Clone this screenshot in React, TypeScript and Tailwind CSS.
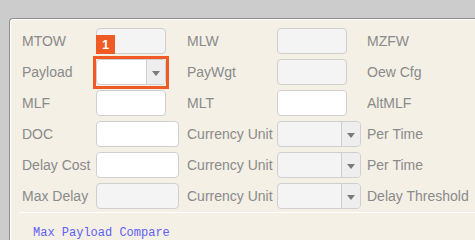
import React from "react";

const Label = ({ children }: { children: React.ReactNode }) => (
  <div className="flex items-center h-[26px] text-[14px] text-[#8a8a8a] whitespace-nowrap">{children}</div>
);

const Input = ({ w, disabled }: { w: number; disabled?: boolean }) => (
  <div
    className={`h-[26px] rounded-[4px] border border-[#cfcfcf] ${disabled ? "bg-[#f4f4f4]" : "bg-white"}`}
    style={{ width: w }}
  />
);

const Arrow = () => (
  <svg width="8" height="5" viewBox="0 0 8 5">
    <path d="M0 0 L8 0 L4 5 Z" fill="#7a7a7a" />
  </svg>
);

const Select = ({ w, disabled }: { w: number; disabled?: boolean }) => (
  <div
    className={`h-[26px] rounded-[4px] border border-[#cfcfcf] flex overflow-hidden ${disabled ? "bg-[#f4f4f4]" : "bg-white"}`}
    style={{ width: w }}
  >
    <div className="flex-1" />
    <div className="w-[19px] border-l border-[#cfcfcf] bg-[#eeeeee] flex items-center justify-center pt-[2px]">
      <Arrow />
    </div>
  </div>
);

export default function App() {
  return (
    <div
      className="w-[475px] h-[240px] bg-[#cccccc] pt-[18px] pl-[9px] overflow-hidden"
      style={{ fontFamily: '"Liberation Sans", Arial, sans-serif' }}
    >
      <div className="h-full bg-[#f4f0e6] border-t border-l border-[#8f8f8f] rounded-tl-[4px] shadow-[inset_1px_1px_0_#ffffff]">
        <div className="grid grid-cols-[74px_91px_90px_90px_1fr] gap-y-[5px] pl-[12px] pt-[9px]">
          <Label>MTOW</Label>
          <Input w={70} disabled />
          <Label>MLW</Label>
          <Input w={70} disabled />
          <Label>MZFW</Label>

          <Label>Payload</Label>
          <div className="relative h-[26px]">
            <Select w={70} />
            <div className="absolute left-[-3px] top-[-3px] w-[76px] h-[33px] border-[3px] border-[#f05a24]" />
            <div className="absolute left-0 top-[-24px] w-[19px] h-[19px] bg-[#f05a24] text-white font-bold text-[13px] flex items-center justify-center leading-none">
              1
            </div>
          </div>
          <Label>PayWgt</Label>
          <Input w={70} disabled />
          <Label>Oew Cfg</Label>

          <Label>MLF</Label>
          <Input w={70} />
          <Label>MLT</Label>
          <Input w={70} />
          <Label>AltMLF</Label>

          <Label>DOC</Label>
          <Input w={83} />
          <Label>Currency Unit</Label>
          <Select w={84} disabled />
          <Label>Per Time</Label>

          <Label>Delay Cost</Label>
          <Input w={83} />
          <Label>Currency Unit</Label>
          <Select w={84} disabled />
          <Label>Per Time</Label>

          <Label>Max Delay</Label>
          <Input w={83} disabled />
          <Label>Currency Unit</Label>
          <Select w={84} disabled />
          <Label>Delay Threshold</Label>
        </div>
        <div className="ml-[9px] mt-[3px] border-t border-white" />
        <div
          className="pl-[23px] pt-[12px] text-[12px] leading-[16px] text-[#5f5ff5]"
          style={{ fontFamily: '"Liberation Mono", "Courier New", monospace' }}
        >
          Max Payload Compare
        </div>
      </div>
    </div>
  );
}
